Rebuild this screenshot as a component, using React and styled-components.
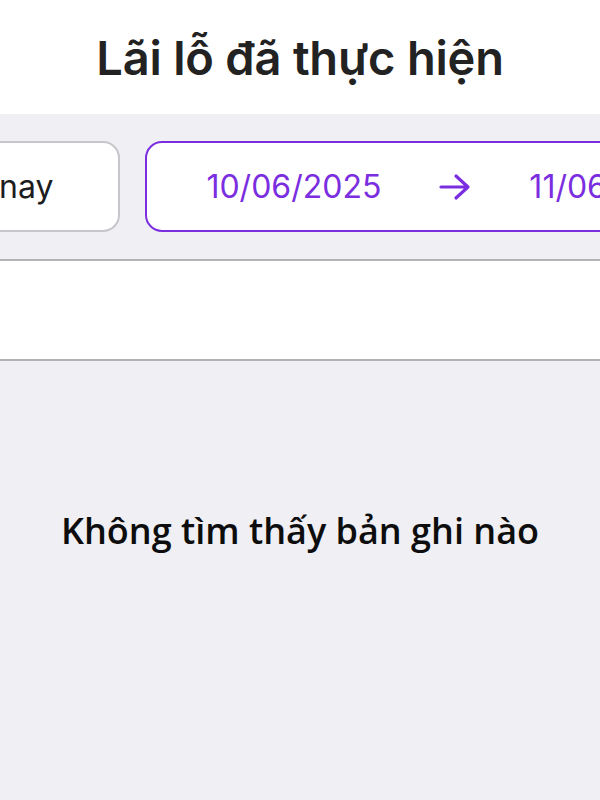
import React from "react";
import styled, { createGlobalStyle } from "styled-components";

const Global = createGlobalStyle`
  html, body { margin: 0; padding: 0; background: #efeff4; }
  body { font-family: Inter, "Noto Sans", sans-serif; }
  #root { min-height: 100vh; }
`;

const Screen = styled.div`
  width: 600px;
  height: 800px;
  overflow: hidden;
  display: flex;
  flex-direction: column;
  background: #efeff4;
`;

const Header = styled.header`
  height: 114px;
  flex: none;
  background: #ffffff;
  display: flex;
  align-items: center;
  justify-content: center;
`;

const Title = styled.h1`
  margin: 0;
  font-family: Inter, sans-serif;
  font-weight: 600;
  font-size: 47px;
  color: #222222;
  letter-spacing: -0.2px;
`;

const FilterBar = styled.div`
  flex: none;
  background: #efeff4;
  padding: 27px 0;
  border-bottom: 2px solid #b3b3b7;
  overflow: hidden;
`;

const Track = styled.div`
  display: flex;
  gap: 25px;
  margin-left: ${(p) => p.$offset}px;
`;

const Chip = styled.div`
  flex: none;
  box-sizing: border-box;
  height: 91px;
  background: #ffffff;
  border: 2px solid ${(p) => (p.$active ? "#7b2ee0" : "#c6c6cb")};
  border-radius: 17px;
  display: flex;
  align-items: center;
  justify-content: center;
  gap: 58px;
  padding: ${(p) => (p.$active ? "0 59px" : "0 65px 0 71px")};
  font-family: Inter, sans-serif;
  font-size: 32px;
  color: ${(p) => (p.$active ? "#7b2ee0" : "#1c1c1e")};
  white-space: nowrap;
`;

const Arrow = styled.svg`
  width: 32px;
  height: 28px;
  display: block;
`;

const Spacer = styled.div`
  flex: none;
  height: 98px;
  background: #ffffff;
  border-bottom: 2px solid #b3b3b7;
`;

const Empty = styled.div`
  flex: 1;
  display: flex;
  justify-content: center;
  padding-top: 145px;
  background: #efeff4;
`;

const EmptyText = styled.p`
  margin: 0;
  font-family: "Open Sans", sans-serif;
  font-weight: 600;
  font-size: 36px;
  color: #0d0d0d;
`;

export default function App() {
  return (
    <>
      <Global />
      <Screen>
        <Header>
          <Title>Lãi lỗ đã thực hiện</Title>
        </Header>
        <FilterBar>
          <Track $offset={-154}>
            <Chip>Hôm nay</Chip>
            <Chip $active>
              <span>10/06/2025</span>
              <Arrow viewBox="0 0 32 28" fill="none" stroke="#7b2ee0" strokeWidth="3.2" strokeLinecap="round" strokeLinejoin="round">
                <path d="M2 14h27M17 3l12 11-12 11" />
              </Arrow>
              <span>11/06/2025</span>
            </Chip>
          </Track>
        </FilterBar>
        <Spacer />
        <Empty>
          <EmptyText>Không tìm thấy bản ghi nào</EmptyText>
        </Empty>
      </Screen>
    </>
  );
}
